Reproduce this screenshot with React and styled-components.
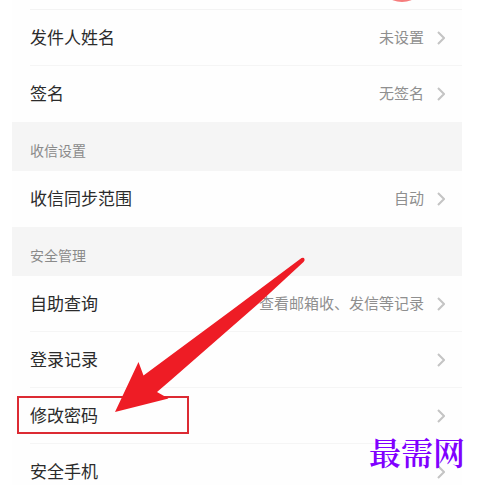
import React from 'react';
import styled, { createGlobalStyle } from 'styled-components';

const SettingItem = ({ label, value, last, children }) => (
  <Item>
    <ItemButton type="button" $last={last}>
      <ItemLabel>{label}</ItemLabel>
      <ItemValue>{value}</ItemValue>
      <Chevron viewBox="0 0 8 14" aria-hidden="true">
        <path d="M1 1L7 7L1 13" />
      </Chevron>
    </ItemButton>
    {children}
  </Item>
);

const App = () => {
  return (
    <>
      <GlobalStyle />
      <Page>
        <Screen>
          <AvatarRow>
            <Avatar />
          </AvatarRow>
          <List>
            <SettingItem label="发件人姓名" value="未设置" />
            <SettingItem label="签名" value="无签名" last />
          </List>

          <SectionTitle>收信设置</SectionTitle>
          <List>
            <SettingItem label="收信同步范围" value="自动" last />
          </List>

          <SectionTitle>安全管理</SectionTitle>
          <List>
            <SettingItem label="自助查询" value="查看邮箱收、发信等记录" />
            <SettingItem label="登录记录" />
            <SettingItem label="修改密码">
              <Highlight />
              <Arrow viewBox="0 0 192 156" aria-hidden="true">
                <path d="M1 156L24.5 106L29.5 119.5L118 54L187.5 2Q190 1 190.5 3Q191 4.5 189.5 6L144 48L57 124L43 136L54.5 142.5Z" />
              </Arrow>
            </SettingItem>
            <SettingItem label="安全手机" last />
          </List>
        </Screen>
        <Watermark>最需网</Watermark>
      </Page>
    </>
  );
};

const GlobalStyle = createGlobalStyle`
  body {
    margin: 0;
    background: #fff;
    font-family: "Noto Sans CJK SC", sans-serif;
  }
`;

const Page = styled.div`
  position: relative;
  height: 100vh;
  overflow: hidden;
`;

const Screen = styled.main`
  margin: 0 20px 0 12px;
  background: #fefefe;
`;

const AvatarRow = styled.div`
  display: flex;
  justify-content: flex-end;
  align-items: flex-end;
  box-sizing: border-box;
  height: 10px;
  margin-left: 18px;
  padding: 0 36px 7px 0;
  border-bottom: 1px solid #f3f3f3;
`;

const Avatar = styled.div`
  flex: none;
  width: 48px;
  height: 48px;
  border-radius: 50%;
  background: #f67c7c;
`;

const List = styled.ul`
  margin: 0;
  padding: 0;
  list-style: none;
`;

const Item = styled.li`
  position: relative;
  padding-left: 18px;
`;

const ItemButton = styled.button`
  display: flex;
  align-items: center;
  box-sizing: border-box;
  width: 100%;
  height: 56px;
  padding: 0 17px 0 0;
  border: none;
  border-bottom: 1px solid ${(props) => (props.$last ? 'transparent' : '#f5f5f5')};
  background: none;
  font-family: inherit;
  text-align: left;
  cursor: pointer;
`;

const ItemLabel = styled.span`
  flex: 1;
  padding-bottom: 1px;
  color: #2b2b2b;
  font-size: 17px;
  line-height: 24px;
`;

const ItemValue = styled.span`
  padding-bottom: 1px;
  color: #8f8f8f;
  font-size: 15px;
  line-height: 24px;
`;

const Chevron = styled.svg`
  width: 8px;
  height: 14px;
  margin-left: 13px;
  fill: none;
  stroke: #c4c4c4;
  stroke-width: 2;
`;

const SectionTitle = styled.h2`
  box-sizing: border-box;
  height: 49px;
  margin: 0;
  padding: 18px 18px 0;
  background: #f5f5f5;
  color: #8a8a8a;
  font-size: 14px;
  font-weight: 400;
  line-height: 20px;
`;

const Highlight = styled.div`
  position: absolute;
  top: 8px;
  left: 5px;
  box-sizing: border-box;
  width: 172px;
  height: 38px;
  border: 2px solid #dc2a33;
  pointer-events: none;
`;

const Arrow = styled.svg`
  position: absolute;
  bottom: 32px;
  left: 102px;
  z-index: 1;
  width: 192px;
  height: 156px;
  fill: #ee1c25;
  pointer-events: none;
`;

const Watermark = styled.div`
  position: absolute;
  right: 17px;
  bottom: 14px;
  z-index: 2;
  color: #8000ff;
  font-family: "Noto Serif CJK SC", "SimSun", "Noto Sans CJK SC", serif;
  font-size: 32px;
  font-weight: 600;
  line-height: 40px;
`;

export default App;
